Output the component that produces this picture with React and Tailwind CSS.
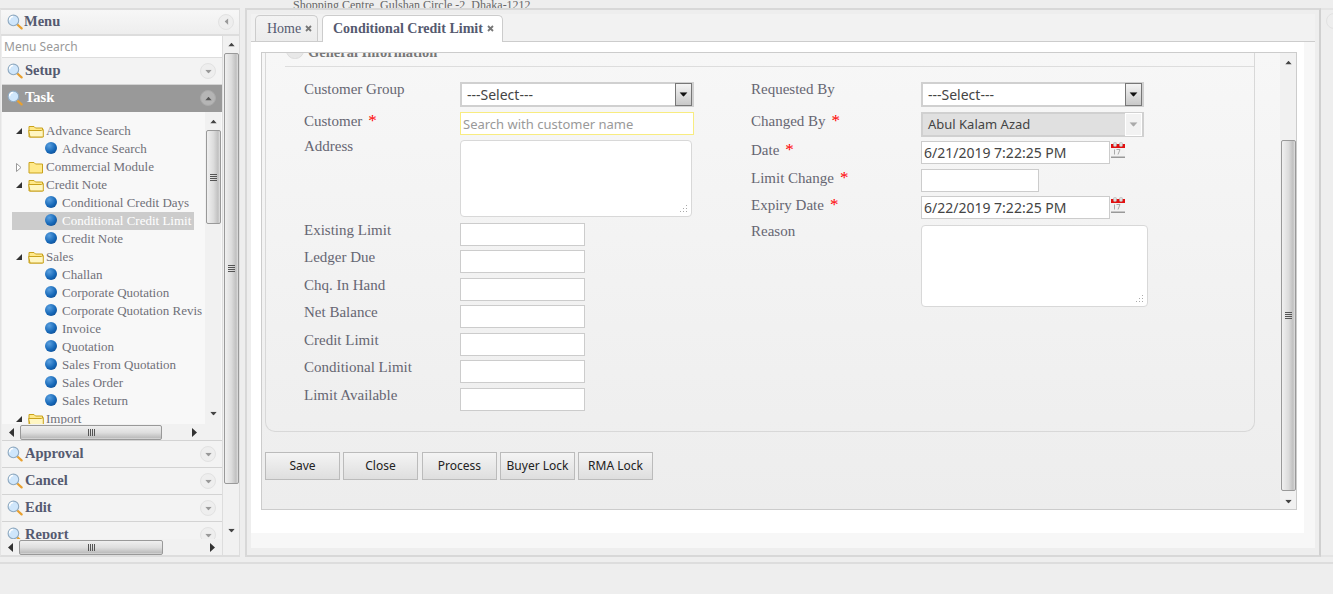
import React from "react";

const serif = { fontFamily: '"Liberation Serif", Georgia, serif' };

function Mag({ className = "" }) {
  return (
    <svg width="16" height="16" viewBox="0 0 16 16" className={"shrink-0 " + className}>
      <line x1="9.8" y1="10" x2="14.6" y2="14.4" stroke="#e8a030" strokeWidth="2.2" strokeLinecap="round" />
      <circle cx="6.4" cy="6.4" r="5.3" fill="#cfe6fb" stroke="#8fa9c0" strokeWidth="1.1" />
      <path d="M2.6 6.2a3.8 3.8 0 0 1 3.6-3.7" stroke="#fff" strokeWidth="1.4" fill="none" />
    </svg>
  );
}

function Tri({ dir = "down", color = "#444", className = "" }) {
  const p = { down: "0,0 9,0 4.5,5", up: "0,5 9,5 4.5,0", left: "5,0 5,9 0,4.5", right: "0,0 0,9 5,4.5" }[dir];
  const w = dir === "left" || dir === "right" ? 5 : 9;
  const h = dir === "left" || dir === "right" ? 9 : 5;
  return (
    <svg width={w} height={h} viewBox={`0 0 ${w} ${h}`} className={"shrink-0 " + className}>
      <polygon points={p} fill={color} />
    </svg>
  );
}

function CircleBtn({ dir = "down", dark = false }) {
  return (
    <span className={"flex h-4 w-4 items-center justify-center rounded-full border " + (dark ? "border-[#aaa] bg-[#b5b5b5]" : "border-[#e2e2e2] bg-[#eeeeee]")}>
      <Tri dir={dir} color={dark ? "#555" : "#999"} className="scale-75" />
    </span>
  );
}

function Grip({ vertical }) {
  return (
    <span className={"flex gap-px " + (vertical ? "flex-col" : "flex-row")}>
      {[0, 1, 2, 3].map((i) => (
        <span key={i} className={"bg-[#555] " + (vertical ? "h-px w-[7px]" : "h-[7px] w-px")} />
      ))}
    </span>
  );
}

function VScroll({ className, before, thumb, after }) {
  return (
    <div className={"flex shrink-0 flex-col items-center bg-[#f1f1f1] " + className}>
      <div className={"flex w-full shrink-0 justify-center " + before}>
        <Tri dir="up" color="#444" className="scale-75" />
      </div>
      <div className={"flex w-[15px] shrink-0 items-center justify-center rounded-[2px] border border-[#999] bg-[linear-gradient(to_right,#f0f0f0,#dcdcdc_50%,#c0c0c0_85%,#e0e0e0)] " + thumb}>
        <Grip vertical />
      </div>
      <div className={"flex w-full flex-1 items-end justify-center " + after}>
        <Tri dir="down" color="#444" className="scale-75" />
      </div>
    </div>
  );
}

function HScroll({ className, thumb, right }) {
  return (
    <div className={"flex shrink-0 items-center bg-[#f1f1f1] " + className}>
      <div className="flex w-[18px] shrink-0 justify-center"><Tri dir="left" color="#333" /></div>
      <div className={"flex h-[15px] shrink-0 items-center justify-center rounded-[2px] border border-[#999] bg-[linear-gradient(to_bottom,#efefef,#dedede_50%,#bdbdbd_90%,#dcdcdc)] " + thumb}>
        <Grip />
      </div>
      <div className={"flex flex-1 justify-center " + right}><Tri dir="right" color="#333" /></div>
    </div>
  );
}

function Section({ label, open }) {
  return (
    <div className={"flex h-[27px] shrink-0 items-center border-b pl-[5px] pr-[6px] " + (open ? "border-[#999] bg-[#999999]" : "border-[#d3d3d3] bg-[#f3f3f3]")}>
      <Mag />
      <span style={serif} className={"ml-[2px] flex-1 text-[14.5px] font-bold " + (open ? "text-white" : "text-[#555a70]")}>{label}</span>
      <CircleBtn dir={open ? "up" : "down"} dark={open} />
    </div>
  );
}

function Folder({ open }) {
  return (
    <svg width="16" height="14" viewBox="0 0 16 14" className="shrink-0">
      <path d="M1 2.5h5l1.5 1.5H14.5v9H1z" fill="#ffe98a" stroke="#c9a21c" />
      {open && <path d="M.6 6.5h12.8l1.9-1v7.5H2z" fill="#fff6c2" stroke="#c9a21c" />}
    </svg>
  );
}

function Orb() {
  return (
    <span className="mt-[-3px] inline-block h-3 w-3 shrink-0 rounded-full bg-[radial-gradient(circle_at_35%_30%,#5aa0e0,#1668b8_55%,#0a3f80)]" />
  );
}

function FolderRow({ label, open = true }) {
  return (
    <div className="flex h-[18px] items-center whitespace-nowrap pl-[14px]">
      <span className="flex w-[12px] justify-start">
        {open ? (
          <svg width="7" height="7" viewBox="0 0 7 7"><polygon points="6,0 6,6 0,6" fill="#333" /></svg>
        ) : (
          <svg width="6" height="9" viewBox="0 0 6 9"><polygon points="0.5,0.5 5,4.5 0.5,8.5" fill="#fff" stroke="#999" /></svg>
        )}
      </span>
      <Folder open={open} />
      <span className="ml-[2px]">{label}</span>
    </div>
  );
}

function LeafRow({ label, active }) {
  return (
    <div className={"flex h-[18px] items-center whitespace-nowrap " + (active ? "ml-[10px] w-[182px] bg-[#cccccc] pl-[33px] text-white" : "pl-[43px]")}>
      <Orb />
      <span className="ml-[5px]">{label}</span>
    </div>
  );
}

function Tree() {
  return (
    <div style={serif} className="flex-1 overflow-hidden pt-[10px] text-[13px] text-[#707078]">
      <FolderRow label="Advance Search" />
      <LeafRow label="Advance Search" />
      <FolderRow label="Commercial Module" open={false} />
      <FolderRow label="Credit Note" />
      <LeafRow label="Conditional Credit Days" />
      <LeafRow label="Conditional Credit Limit" active />
      <LeafRow label="Credit Note" />
      <FolderRow label="Sales" />
      <LeafRow label="Challan" />
      <LeafRow label="Corporate Quotation" />
      <LeafRow label="Corporate Quotation Revis" />
      <LeafRow label="Invoice" />
      <LeafRow label="Quotation" />
      <LeafRow label="Sales From Quotation" />
      <LeafRow label="Sales Order" />
      <LeafRow label="Sales Return" />
      <FolderRow label="Import" />
    </div>
  );
}

function Sidebar() {
  return (
    <aside className="flex w-[240px] shrink-0 flex-col border-x border-y-2 border-[#dddddd] border-l-[#e4e4e4] bg-[#eeeeee]">
      <div className="flex h-[24px] shrink-0 items-center bg-[linear-gradient(to_bottom,#f7f7f7,#eeeeee)] pb-px pl-[6px] pr-[5px]">
        <Mag />
        <span style={serif} className="ml-px flex-1 text-[14.5px] font-bold text-[#555a70]">Menu</span>
        <CircleBtn dir="left" />
      </div>
      <div className="flex min-h-0 flex-1 border-t-2 border-[#dddddd]">
        <div className="flex min-w-0 flex-1 flex-col overflow-hidden">
          <div className="flex min-h-0 flex-1 flex-col overflow-hidden pl-px">
            <div style={{ fontFamily: '"Noto Sans", sans-serif' }} className="h-[21px] shrink-0 bg-white pl-[2px] text-[12px] leading-[21px] text-[#999]">Menu Search</div>
            <div className="h-px shrink-0 bg-[#dddddd]" />
            <Section label="Setup" />
            <Section label="Task" open />
            <div className="flex h-[329px] shrink-0 border-b border-[#d3d3d3] bg-[#f8f8f8]">
              <div className="flex min-w-0 flex-1 flex-col">
                <Tree />
                <HScroll className="h-4" thumb="w-[142px]" right="pl-[22px]" />
              </div>
              <VScroll className="mr-px w-4" before="h-[18px] items-center" thumb="h-[94px]" after="pb-[24px]" />
            </div>
            <Section label="Approval" />
            <Section label="Cancel" />
            <Section label="Edit" />
            <Section label="Report" />
          </div>
          <HScroll className="h-4" thumb="w-[144px]" right="pl-[40px]" />
        </div>
        <VScroll className="w-[17px] border-l border-[#dddddd]" before="h-[17px] items-center" thumb="h-[431px]" after="pb-[22px]" />
      </div>
    </aside>
  );
}

function Tab({ label, active }) {
  return (
    <div style={serif} className={"flex items-center rounded-t-[5px] border border-b-0 border-[#cccccc] " + (active ? "z-10 mb-[-1px] h-[27px] w-[181px] bg-white pb-[2px] pl-[10px] font-bold text-[#555a70]" : "h-[26px] w-[63px] bg-[linear-gradient(to_bottom,#f3f3f3,#ececec)] pl-[11px] text-[#555a70]")}>
      <span className="text-[14px]">{label}</span>
      <svg width="7" height="7" viewBox="0 0 7 7" className="ml-[4px]">
        <path d="M1 1l5 5M6 1L1 6" stroke="#777" strokeWidth="1.8" />
      </svg>
    </div>
  );
}

function Label({ text, req, className = "" }) {
  return (
    <div style={serif} className={"text-[15px] leading-[14px] text-[#666672] " + className}>
      {text}
      {req && <span className="ml-[6px] text-[17px] leading-none text-[#ff0000]">*</span>}
    </div>
  );
}

const inputFont = { fontFamily: '"Noto Sans", sans-serif' };

function Select({ value, disabled, width }) {
  return (
    <div style={inputFont} className={"flex h-[25px] items-center border-2 " + width + " " + (disabled ? "border-[#d0d0d0] bg-[#e0e0e0]" : "border-[#d0d0d0] bg-white")}>
      <span className={"flex-1 pl-[5px] text-[#444] " + (disabled ? "text-[13px]" : "text-[14px]")}>{value}</span>
      <span className={"flex h-[23px] w-[17px] items-center justify-center border " + (disabled ? "border-[#fff] bg-[#f2f2f2]" : "border-[#777] bg-[linear-gradient(to_bottom,#f4f4f4,#c8c8c8)]")}>
        <Tri dir="down" color={disabled ? "#aaa" : "#111"} className="scale-90" />
      </span>
    </div>
  );
}

function TextBox({ width = "w-[125px]", value }) {
  return (
    <div style={inputFont} className={"h-[23px] border border-[#cccccc] bg-white pl-[2px] text-[14px] leading-[22px] text-[#444] " + width}>{value}</div>
  );
}

function TextArea({ width, height }) {
  return (
    <div className={"relative rounded-[4px] border border-[#d8d8d8] bg-white " + width + " " + height}>
      <svg width="8" height="8" viewBox="0 0 8 8" className="absolute bottom-[3px] right-[3px]">
        <g fill="#aaa">
          <rect x="6" y="0" width="1" height="1" /><rect x="3" y="3" width="1" height="1" /><rect x="6" y="3" width="1" height="1" />
          <rect x="0" y="6" width="1" height="1" /><rect x="3" y="6" width="1" height="1" /><rect x="6" y="6" width="1" height="1" />
        </g>
      </svg>
    </div>
  );
}

function Cal() {
  return (
    <svg width="14" height="16" viewBox="0 0 14 16" className="ml-px mt-[1px] shrink-0">
      <rect x="0" y="2" width="14" height="14" fill="#f2f2f2" />
      <rect x="0" y="2" width="14" height="4" fill="#e21010" />
      <rect x="0" y="14.5" width="14" height="1.5" fill="#999" />
      <rect x="2.5" y="0.5" width="3" height="4" rx="1" fill="#ddd" stroke="#aaa" strokeWidth=".5" />
      <rect x="8.5" y="0.5" width="3" height="4" rx="1" fill="#ddd" stroke="#aaa" strokeWidth=".5" />
      <rect x="3" y="7.5" width="1" height="5" fill="#aaa" />
      <path d="M5.5 7.5h3.5l-2 5" stroke="#aaa" fill="none" />
    </svg>
  );
}

function Row({ top, labelW, label, req, labelPad = "", children }) {
  return (
    <div className={"flex items-start " + top}>
      <div className={"shrink-0 " + labelW}>
        <Label text={label} req={req} className={labelPad} />
      </div>
      {children}
    </div>
  );
}

function Btn({ label, className = "" }) {
  return (
    <div style={inputFont} className={"flex h-7 w-[75px] items-center justify-center border border-[#bbbbbb] bg-[linear-gradient(to_bottom,#f4f4f4,#dedede)] text-[12px] text-[#222] " + className}>{label}</div>
  );
}

function Form() {
  const L = "w-[156px]";
  const R = "w-[170px]";
  return (
    <div className="flex h-[458px] w-[1036px] overflow-hidden border border-[#cccccc] bg-[linear-gradient(to_bottom,#f7f7f7,#ededed)]">
      <div className="min-w-0 flex-1 pl-[3px]">
        <div className="h-[379px] rounded-b-[10px] border border-t-0 border-[#d8d8d8] pr-0">
          <div className="relative ml-[19px] h-[14px] border-b border-[#dddddd]">
            <span className="absolute -top-[11px] left-px h-[17px] w-[18px] rounded-full border border-[#ddd] bg-[#e8e8e8]" />
            <span style={serif} className="absolute -top-[8px] left-[23px] text-[14.5px] leading-[14px] font-bold text-[#777]">General Information</span>
          </div>
          <div className="flex pl-[38px] pt-[15px]">
            <div className="w-[447px]">
              <Row top="" labelW={L} label="Customer Group"><Select value="---Select---" width="w-[234px]" /></Row>
              <Row top="mt-[5px]" labelW={L} label="Customer" req>
                <div style={inputFont} className="h-[23px] w-[234px] border border-[#f8ec80] bg-white pl-[2px] text-[13px] leading-[22px] text-[#999]">Search with customer name</div>
              </Row>
              <Row top="mt-[5px]" labelW={L} label="Address" labelPad="-mt-px"><TextArea width="w-[232px]" height="h-[77px]" /></Row>
              <Row top="mt-[6px]" labelW={L} label="Existing Limit"><TextBox /></Row>
              <Row top="mt-[4px]" labelW={L} label="Ledger Due"><TextBox /></Row>
              <Row top="mt-[5px]" labelW={L} label="Chq. In Hand"><TextBox /></Row>
              <Row top="mt-[4px]" labelW={L} label="Net Balance"><TextBox /></Row>
              <Row top="mt-[5px]" labelW={L} label="Credit Limit"><TextBox /></Row>
              <Row top="mt-[4px]" labelW={L} label="Conditional Limit"><TextBox /></Row>
              <Row top="mt-[5px]" labelW={L} label="Limit Available"><TextBox /></Row>
            </div>
            <div className="flex-1">
              <Row top="" labelW={R} label="Requested By"><Select value="---Select---" width="w-[223px]" /></Row>
              <Row top="mt-[5px]" labelW={R} label="Changed By" req><Select value="Abul Kalam Azad" disabled width="w-[223px]" /></Row>
              <Row top="mt-[4px]" labelW={R} label="Date" req>
                <TextBox width="w-[189px]" value="6/21/2019 7:22:25 PM" /><Cal />
              </Row>
              <Row top="mt-[5px]" labelW={R} label="Limit Change" req><TextBox width="w-[118px]" /></Row>
              <Row top="mt-[4px]" labelW={R} label="Expiry Date" req>
                <TextBox width="w-[189px]" value="6/22/2019 7:22:25 PM" /><Cal />
              </Row>
              <Row top="mt-[6px]" labelW={R} label="Reason" labelPad="-mt-px"><TextArea width="w-[227px]" height="h-[82px]" /></Row>
            </div>
          </div>
        </div>
        <div className="mt-5 flex gap-[3px]">
          <Btn label="Save" />
          <Btn label="Close" />
          <Btn label="Process" className="ml-px" />
          <Btn label="Buyer Lock" />
          <Btn label="RMA Lock" />
        </div>
      </div>
      <VScroll className="ml-[25px] w-[16px]" before="h-[87px] items-start pt-[7px]" thumb="h-[351px]" after="pb-[5px]" />
    </div>
  );
}

export default function App() {
  return (
    <div className="flex h-[594px] w-[1333px] flex-col overflow-hidden bg-[#eeeeee]">
      <div className="relative h-2 shrink-0 overflow-hidden">
        <span style={serif} className="absolute -top-[2px] left-[293px] whitespace-nowrap text-[12px] leading-[14px] text-[#666]">Shopping Centre, Gulshan Circle -2, Dhaka-1212</span>
      </div>
      <div className="flex h-[549px] shrink-0">
        <Sidebar />
        <div className="w-[5px] shrink-0" />
        <main className="w-[1076px] shrink-0 border-2 border-[#d8d8d8] border-r-[#d0d0d0] p-[4px]">
          <div className="flex h-[534px] flex-col bg-[#f7f7f7]">
            <div className="flex h-[28px] shrink-0 items-end gap-[4px] border-b border-[#cccccc] bg-[#f2f2f2] pl-[4px]">
              <Tab label="Home" />
              <Tab label="Conditional Credit Limit" active />
            </div>
            <div className="mr-[11px] h-[491px] shrink-0 bg-white pl-[10px] pt-[10px]">
              <Form />
            </div>
          </div>
        </main>
        <div className="relative flex-1 border-y-2 border-[#e4e4e4]">
          <span className="absolute left-[5px] top-[3px] h-4 w-4 rounded-full border border-[#e2e2e2] bg-[#eeeeee]" />
        </div>
      </div>
      <div className="mt-[5px] flex-1 border-t-2 border-[#dddddd] bg-[#eeeeee]" />
    </div>
  );
}
